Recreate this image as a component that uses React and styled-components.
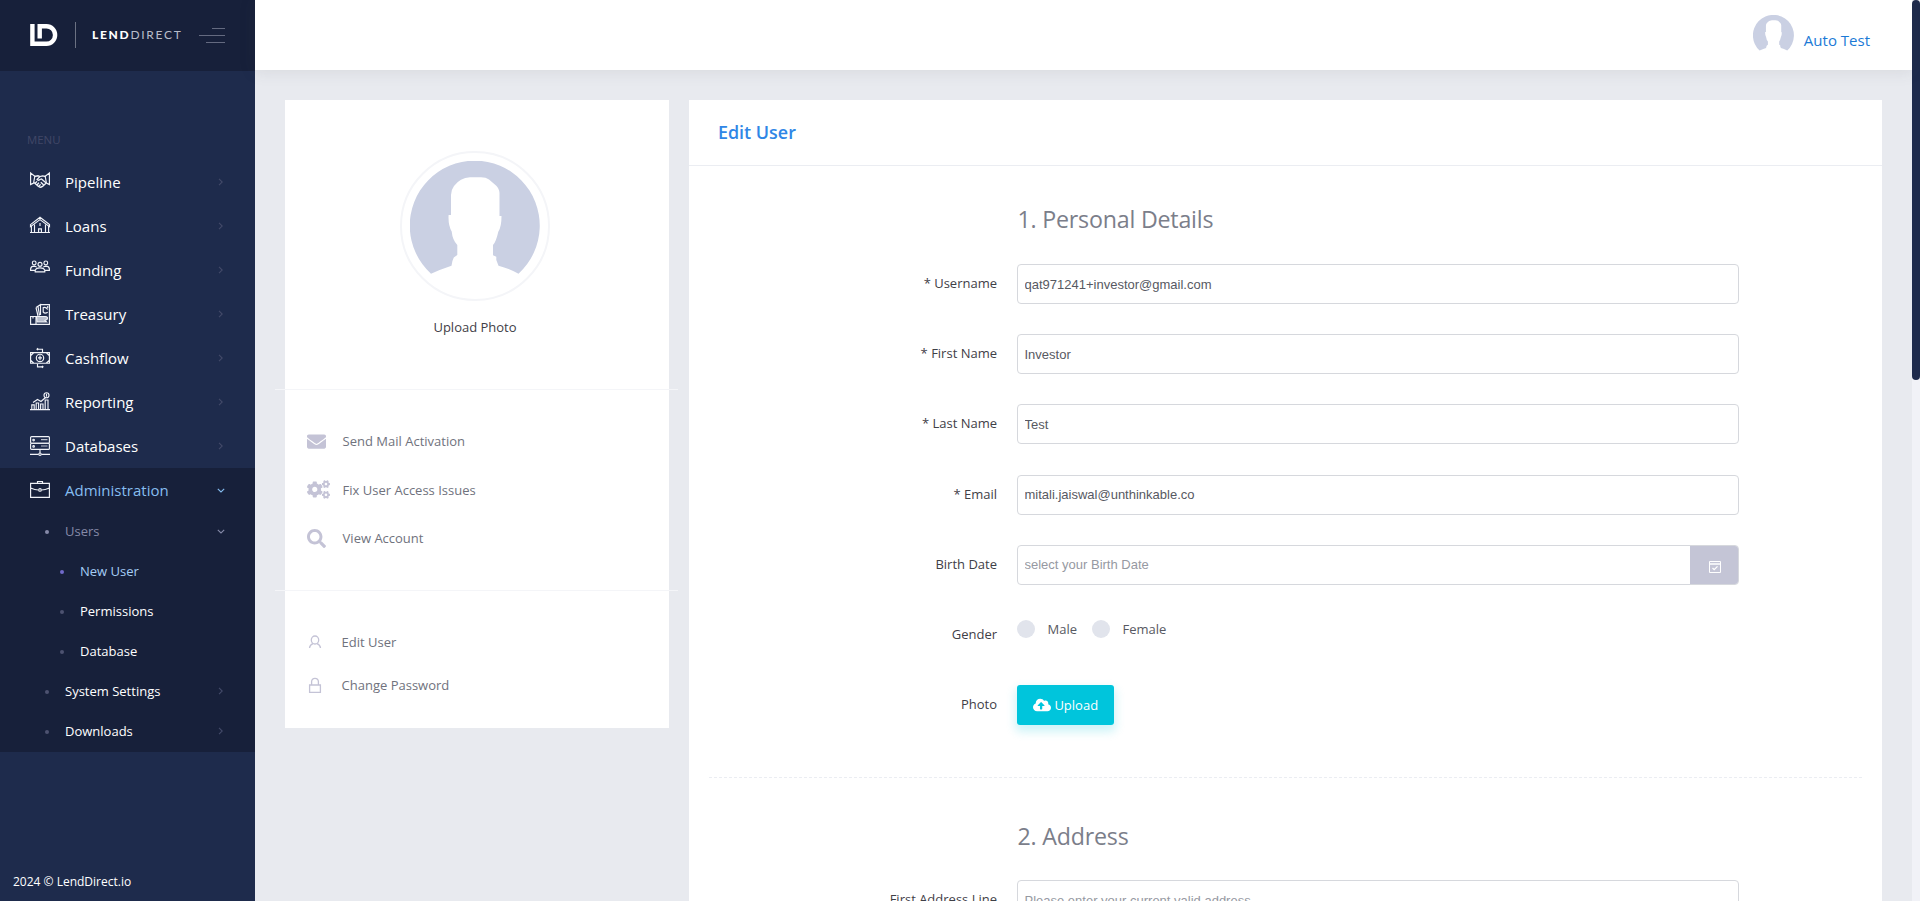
import React from 'react';
import styled, { createGlobalStyle, css } from 'styled-components';
import { FaEnvelope, FaCogs, FaSearch, FaCloudUploadAlt } from 'react-icons/fa';

const GlobalStyle = createGlobalStyle`
  * { box-sizing: border-box; }
  body {
    margin: 0;
    overflow: hidden;
    background: #e8eaef;
    font-family: 'Open Sans', 'Noto Sans', sans-serif;
    font-size: 13px;
    color: #575962;
  }
`;

const Page = styled.div`
  display: grid;
  grid-template-columns: 255px 1fr 8px;
  height: 901px;
  overflow: hidden;
`;

/* Sidebar */
const Sidebar = styled.aside`
  display: flex;
  flex-direction: column;
  background: #1e2b4c;
  color: #fff;
  min-height: 0;
`;
const Brand = styled.div`
  display: flex;
  align-items: center;
  height: 71px;
  flex: none;
  padding: 0 30px 1px;
  background: #17203a;
`;
const BrandRule = styled.span`
  width: 1px;
  height: 26px;
  margin: 0 16px 0 17px;
  background: #6b7182;
`;
const BrandName = styled.span`
  flex: 1;
  font-family: Lato, sans-serif;
  font-size: 12px;
  font-weight: 400;
  letter-spacing: 1.7px;
  line-height: 16px;
  color: #b9bdc9;
  white-space: nowrap;
  b { font-weight: 900; color: #fff; }
`;
const Toggle = styled.span`
  display: flex;
  flex-direction: column;
  align-items: flex-end;
  gap: 6px;
  width: 26px;
  i { height: 1px; background: #646a80; }
  i:nth-child(1) { width: 13px; }
  i:nth-child(2) { width: 26px; }
  i:nth-child(3) { width: 19px; }
`;
const MenuTitle = styled.div`
  flex: none;
  height: 89px;
  padding: 61px 27px 0;
  font-size: 11.4px;
  line-height: 16px;
  color: #414767;
`;
const Group = styled.div`
  background: ${(p) => (p.$open ? '#17203a' : 'transparent')};
`;
const MenuRow = styled.div`
  display: flex;
  align-items: center;
  height: 44px;
  padding: 0 30px;
  font-size: 15px;
  color: ${(p) => (p.$active ? '#86bdf0' : '#fff')};
`;
const MenuIcon = styled.svg`
  width: 20px;
  height: 22px;
  margin-right: 15px;
  flex: none;
  fill: none;
  stroke: #f1f3f8;
  stroke-width: 1.15;
  overflow: visible;
`;
const Label = styled.span`
  flex: 1;
  white-space: nowrap;
`;
const Chevron = styled.svg`
  width: 8px;
  height: 8px;
  flex: none;
  fill: none;
  stroke: ${(p) => p.$color || '#434a69'};
  stroke-width: 1.1;
`;
const SubRow = styled.div`
  display: flex;
  align-items: center;
  height: 40px;
  padding: 0 30px 2px ${(p) => (p.$deep ? 60 : 45)}px;
  font-size: 13px;
  color: ${(p) => p.$color || '#fff'};
`;
const Dot = styled.i`
  width: 4px;
  height: 4px;
  margin: 2px 16px 0 0;
  border-radius: 50%;
  background: ${(p) => p.$color || '#4d5270'};
`;
const Copyright = styled.div`
  margin-top: auto;
  padding: 0 13px 12px;
  font-size: 12px;
  font-weight: 500;
  line-height: 15px;
`;

/* Main column */
const Main = styled.div`
  display: flex;
  flex-direction: column;
  min-width: 0;
  min-height: 0;
`;
const Topbar = styled.header`
  display: flex;
  justify-content: flex-end;
  align-items: flex-start;
  gap: 10px;
  flex: none;
  height: 70px;
  padding: 15px 42px 0 0;
  background: #fff;
  box-shadow: 0 1px 15px 1px rgba(69, 65, 78, 0.1);
  z-index: 1;
`;
const UserName = styled.span`
  padding-top: 15px;
  font-size: 15px;
  line-height: 20px;
  color: #1b7ad6;
`;
const Content = styled.main`
  display: flex;
  align-items: flex-start;
  gap: 20px;
  padding: 30px 30px 0;
  flex: 1;
  min-height: 0;
`;

/* Profile card */
const ProfileCard = styled.section`
  width: 384px;
  flex: none;
  height: 628px;
  background: #fff;
`;
const PhotoBlock = styled.div`
  display: flex;
  flex-direction: column;
  align-items: center;
  height: 289px;
  padding: 51px 4px 0 0;
`;
const PhotoRing = styled.div`
  width: 150px;
  height: 150px;
  padding: 8px;
  border: 2px solid #f4f5f8;
  border-radius: 50%;
`;
const PhotoCaption = styled.div`
  margin-top: 16px;
  font-size: 13px;
  font-weight: 500;
  line-height: 20px;
  color: #3f4047;
`;
const Divider = styled.hr`
  height: 1px;
  margin: 0 -9px 0 -10px;
  border: 0;
  background: #f4f5f8;
`;
const LinkList = styled.div`
  display: flex;
  flex-direction: column;
  padding-left: 22px;
  color: #6f727d;
  ${(p) =>
    p.$compact
      ? css`padding-top: 29px; --row: 43px; --icon: 34.6px;`
      : css`padding-top: 27px; height: 200px; --row: 48.5px; --icon: 35.6px;`}
`;
const LinkItem = styled.a`
  display: flex;
  align-items: center;
  height: var(--row);
  svg { color: #c4c3d6; }
`;
const LinkIcon = styled.span`
  display: flex;
  width: var(--icon);
`;

/* Form card */
const FormCard = styled.section`
  flex: 1;
  min-width: 0;
  height: 1400px;
  background: #fff;
`;
const CardHeader = styled.div`
  height: 66px;
  padding: 0 29px;
  border-bottom: 1px solid #ebedf2;
  font-size: 17.9px;
  font-weight: 600;
  line-height: 65px;
  color: #2f86e6;
`;
const SectionTitle = styled.h3`
  margin: 0 0 0 328.5px;
  padding-top: ${(p) => p.$top}px;
  height: ${(p) => p.$height}px;
  font-size: 23.2px;
  font-weight: 400;
  letter-spacing: -0.2px;
  line-height: 30px;
  color: #7b7e8a;
`;
const Field = styled.div`
  display: flex;
  height: 70.2px;
`;
const FieldLabel = styled.label`
  width: 308px;
  margin-right: 20px;
  line-height: 20px;
  padding-top: 9px;
  text-align: right;
  color: #3f4047;
`;
const InputBox = styled.div`
  display: flex;
  width: 722px;
  height: 40px;
  border: 1px solid #d6d8dd;
  border-radius: 4px;
  overflow: hidden;
`;
const Input = styled.input`
  flex: 1;
  padding: 0 6.5px;
  border: 0;
  outline: 0;
  background: transparent;
  font-family: 'Liberation Sans', Arial, sans-serif;
  font-size: 13px;
  color: #575962;
  &::placeholder { color: #9699a2; opacity: 1; }
`;
const DateButton = styled.span`
  display: flex;
  align-items: center;
  justify-content: center;
  width: 49px;
  margin: -1px -1px -1px 0;
  padding-top: 4px;
  background: #c4c5d6;
`;
const Radios = styled.div`
  display: flex;
  height: 18px;
  margin-top: 5.5px;
`;
const RadioItem = styled.label`
  display: flex;
  align-items: center;
  width: 75px;
  gap: 12.5px;
  line-height: 18px;
  &::before {
    content: '';
    width: 18px;
    height: 18px;
    border-radius: 50%;
    background: #e1e4ec;
  }
`;
const UploadButton = styled.button`
  display: flex;
  align-items: center;
  justify-content: center;
  gap: 3.5px;
  width: 97px;
  height: 40px;
  padding: 0;
  border: 0;
  border-radius: 3px;
  background: #00c5dc;
  box-shadow: 0 5px 10px 2px rgba(0, 197, 220, 0.19);
  font-family: inherit;
  font-size: 13px;
  font-weight: 500;
  color: #fff;
`;
const Dashed = styled.div`
  height: 1px;
  margin: ${(p) => p.$top}px 20px 0;
  background: repeating-linear-gradient(90deg, #ebedf2 0 3px, transparent 3px 5px);
`;

/* Scrollbar */
const Track = styled.div`
  background: #f1f2f7;
`;
const Thumb = styled.div`
  height: 380px;
  border-radius: 4px;
  background: #1e2b4c;
`;

const AvatarSvg = styled.svg`
  display: block;
`;
const Avatar = ({ size }) => (
  <AvatarSvg width={size} height={size} viewBox="0 0 130 130">
    <path
      fill="#cad0e3"
      d="M21 112.7A65 65 0 1 1 108.5 112.7Q98 107 88.5 104.7L86.3 99V95.7L83 94.3V84Q86 81 88.3 70.7Q91.5 66 91.5 55H89.5V32Q89 27 86 24.5L79 18.5Q76 16.3 71 16.3H60Q50 17 44 25Q41 29 41 34V54H38.6Q38 64 41.7 70.5Q42.5 79 47.3 84V94L43.8 96.5Q42 100 41.5 104.7Q30 108.5 21 112.7Z"
    />
  </AvatarSvg>
);

const icons = {
  handshake: (
    <>
      <path d="M.6 2 4.8 5.2 3.6 12 .6 13.5ZM19.4 2 15.2 5.2 16.4 12 19.4 13.5Z" />
      <path d="M4.5 5.5 8 4.8 10 5.6 12.5 4.8 15.6 5.5M10 5.5 7 8.5Q8 10 10 8.5L11.5 8 16.2 12" strokeWidth="1.3" />
      <path d="M4 11.5 8.5 15.6Q10.2 17 12.5 15.4L16 12.2M5.3 12.3 7 10.4M7.2 13.7 8.9 11.8M9 15.2 10.6 13.3M10.8 11.2 13.5 13.8" strokeWidth="1.3" />
    </>
  ),
  house: (
    <>
      <path d="M.5 9.6 10 2.2 19.5 9.6V11.6L10 4.6.5 11.6Z" />
      <path d="M1.4 11V17.3M18.6 11V17.3M4.5 9.6V17.3M15.5 9.6V17.3M0 17.5H20M8.6 17V13.8H11.4V17M10 8V11" />
    </>
  ),
  people: (
    <>
      <circle cx="4.2" cy="3.9" r="1.9" />
      <circle cx="15.8" cy="3.9" r="1.9" />
      <circle cx="10" cy="5.3" r="2" />
      <path d="M5 11.4H.6V9.8Q1 7.1 4.2 7.1 6 7.3 6.6 8.3M15 11.4H19.4V9.8Q19 7.1 15.8 7.1 14 7.3 13.4 8.3M5.2 12.8V11.5Q5.8 8.9 10 8.9T14.8 11.5V12.8Z" />
    </>
  ),
  money: (
    <>
      <path d="M10.5 1.6H19.4V21.4H12.5M6 4.5 10.5 1.6V12M6 4.5 8 13M8 3.6 9.5 12.5M.6 13.5H6V21.4H.6ZM6 21.4H12.5M3 13V15.5" />
      <path d="M17.7 6.5Q15.8 3.5 13.2 4.6V9Q15 11 17.7 9.2M17.7 3V5" />
      <path d="M6.5 13.5H15Q18.6 13.8 17 16.5L15 17.5 16.5 19H7Z" fill="#b9bfcd" />
    </>
  ),
  cash: (
    <>
      <path d="M.6 5.6H19.4V16.2H.6ZM.8 8.5 3.6 5.8M16.4 5.8 19.2 8.5M.8 13.3 3.6 16M16.4 16 19.2 13.3" />
      <circle cx="10" cy="10.9" r="3.7" />
      <path d="M10 8.6V13.2M8 10.9H12M12.5 5V2.2H7M8 1.2 7 2.2 8 3.2M7.5 17V19.8H13M12 18.8 13 19.8 12 20.8" />
    </>
  ),
  chart: (
    <>
      <path d="M0 18.6H20M1.8 18V13.8H4.2V18M6.2 18V12H8.6V18M10.6 18V13H13V18M15.2 18V9H18V18M3 11.5 7.5 8.5 11 10.5 15.5 6.5" />
      <circle cx="16.5" cy="4.2" r="2.5" />
      <path d="M16.5 2.7V5.7" />
    </>
  ),
  server: (
    <>
      <rect x=".6" y="1.6" width="18.8" height="6.6" rx="1" />
      <rect x=".6" y="8.2" width="18.8" height="6.2" rx="1" />
      <circle cx="3.6" cy="5" r=".8" />
      <circle cx="3.6" cy="11.4" r=".8" />
      <path d="M11 4.6H17.5M11 11H17.5" strokeOpacity=".75" />
      <path d="M10 14.5V18M0 19.4H8.6M11.4 19.4H20" />
      <circle cx="10" cy="19.2" r="1.2" />
    </>
  ),
  briefcase: (
    <>
      <path d="M.6 4.4H19.4V18.4H.6ZM7.5 4V2.5H12.5V4M.6 9Q5 11 8.4 11M19.4 9Q15 11 11.6 11" />
      <circle cx="10" cy="10.9" r="1.3" />
    </>
  ),
};

const menu = [
  ['handshake', 'Pipeline'],
  ['house', 'Loans'],
  ['people', 'Funding'],
  ['money', 'Treasury'],
  ['cash', 'Cashflow'],
  ['chart', 'Reporting'],
  ['server', 'Databases'],
];

const Right = ({ color }) => (
  <Chevron viewBox="0 0 8 8" $color={color}><path d="M2 .8 5.2 4 2 7.2" /></Chevron>
);
const Down = ({ color }) => (
  <Chevron viewBox="0 0 8 8" $color={color}><path d="M.8 2.8 4 6 7.2 2.8" /></Chevron>
);

const TextField = ({ label, children, ...input }) => (
  <Field>
    <FieldLabel>{label}</FieldLabel>
    <InputBox>
      <Input {...input} readOnly />
      {children}
    </InputBox>
  </Field>
);

export default function App() {
  return (
    <>
      <GlobalStyle />
      <Page>
        <Sidebar>
          <Brand>
            <svg width="28" height="22" viewBox="0 0 28 22" fill="none" stroke="#fff">
              <path d="M2.4 0V19.8H16.5A8.6 8.8 0 0 0 16.5 2.2H9.7V14.5" strokeWidth="4.4" />
            </svg>
            <BrandRule />
            <BrandName><b>LEND</b>DIRECT</BrandName>
            <Toggle><i /><i /><i /></Toggle>
          </Brand>
          <MenuTitle>MENU</MenuTitle>
          {menu.map(([icon, text]) => (
            <MenuRow key={text}>
              <MenuIcon viewBox="0 0 20 22">{icons[icon]}</MenuIcon>
              <Label>{text}</Label>
              <Right />
            </MenuRow>
          ))}
          <Group $open>
            <MenuRow $active>
              <MenuIcon viewBox="0 0 20 22">{icons.briefcase}</MenuIcon>
              <Label>Administration</Label>
              <Down color="#86bdf0" />
            </MenuRow>
            <SubRow $color="#868aa8"><Dot $color="#868aa8" /><Label>Users</Label><Down color="#868aa8" /></SubRow>
            <SubRow $deep $color="#a5cdf5"><Dot $color="#716aca" /><Label>New User</Label></SubRow>
            <SubRow $deep><Dot /><Label>Permissions</Label></SubRow>
            <SubRow $deep><Dot /><Label>Database</Label></SubRow>
            <SubRow><Dot /><Label>System Settings</Label><Right /></SubRow>
            <SubRow><Dot /><Label>Downloads</Label><Right /></SubRow>
          </Group>
          <Copyright>2024 © LendDirect.io</Copyright>
        </Sidebar>

        <Main>
          <Topbar>
            <Avatar size={41} />
            <UserName>Auto Test</UserName>
          </Topbar>
          <Content>
            <ProfileCard>
              <PhotoBlock>
                <PhotoRing><Avatar size={130} /></PhotoRing>
                <PhotoCaption>Upload Photo</PhotoCaption>
              </PhotoBlock>
              <Divider />
              <LinkList>
                <LinkItem><LinkIcon><FaEnvelope size={19} /></LinkIcon>Send Mail Activation</LinkItem>
                <LinkItem><LinkIcon><FaCogs size={23} /></LinkIcon>Fix User Access Issues</LinkItem>
                <LinkItem><LinkIcon><FaSearch size={19} /></LinkIcon>View Account</LinkItem>
              </LinkList>
              <Divider />
              <LinkList $compact>
                <LinkItem>
                  <LinkIcon>
                    <svg width="16" height="16" viewBox="0 0 16 16" fill="none" stroke="currentColor" strokeWidth="1.3">
                      <ellipse cx="8" cy="6" rx="3.7" ry="4" />
                      <path d="M2.5 14Q2.8 10.8 6 9.6M13.5 14Q13.2 10.8 10 9.6" />
                    </svg>
                  </LinkIcon>
                  Edit User
                </LinkItem>
                <LinkItem>
                  <LinkIcon>
                    <svg width="16" height="16" viewBox="0 0 16 16" fill="none" stroke="currentColor" strokeWidth="1.3">
                      <path d="M2.6 8H13.4V15.3H2.6ZM4.6 8V4.5Q4.8 1.3 8 1.3T11.4 4.5V8" />
                    </svg>
                  </LinkIcon>
                  Change Password
                </LinkItem>
              </LinkList>
            </ProfileCard>

            <FormCard>
              <CardHeader>Edit User</CardHeader>
              <SectionTitle $top={38} $height={98}>1. Personal Details</SectionTitle>
              <TextField label="* Username" value="qat971241+investor@gmail.com" />
              <TextField label="* First Name" value="Investor" />
              <TextField label="* Last Name" value="Test" />
              <TextField label="* Email" value="mitali.jaiswal@unthinkable.co" />
              <TextField label="Birth Date" placeholder="select your Birth Date">
                <DateButton>
                  <svg width="12" height="12" viewBox="0 0 12 12" fill="none" stroke="#fff">
                    <path d="M.5.5H11.5V11.5H.5Z" />
                    <path d="M0 3H12" strokeWidth="1.6" />
                    <path d="M3.5 7 5.2 8.7 8.5 5.4" strokeWidth="1.3" />
                  </svg>
                </DateButton>
              </TextField>
              <Field>
                <FieldLabel>Gender</FieldLabel>
                <Radios>
                  <RadioItem>Male</RadioItem>
                  <RadioItem>Female</RadioItem>
                </Radios>
              </Field>
              <Field>
                <FieldLabel>Photo</FieldLabel>
                <UploadButton><FaCloudUploadAlt size={18} />Upload</UploadButton>
              </Field>
              <Dashed $top={21.6} />
              <SectionTitle $top={43} $height={102.4}>2. Address</SectionTitle>
              <TextField label="First Address Line" placeholder="Please enter your current valid address" />
            </FormCard>
          </Content>
        </Main>

        <Track><Thumb /></Track>
      </Page>
    </>
  );
}
